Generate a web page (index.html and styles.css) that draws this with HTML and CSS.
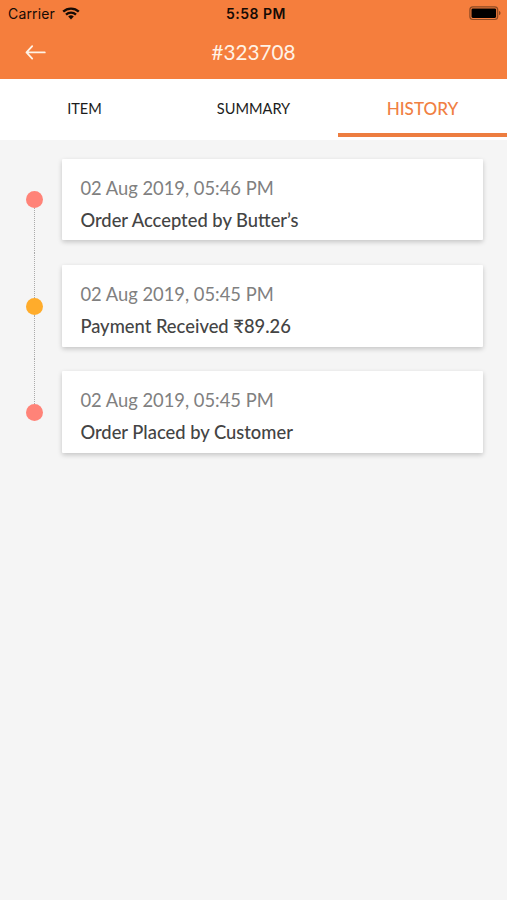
FILE: index.html
```html
<!DOCTYPE html>
<html lang="en">
<head>
<meta charset="utf-8">
<title>Order #323708</title>
<link rel="stylesheet" href="styles.css">
</head>
<body>
<header class="header">
  <div class="status">
    <div class="carrier"><span>Carrier</span>
      <svg class="wifi" width="18" height="13" viewBox="0 0 18 13" fill="none" stroke="#160b05" stroke-width="2.3"><path d="M1.2 4.7a11.2 11.2 0 0 1 15.6 0M4 7.7a7.2 7.2 0 0 1 10 0"/><path d="M9 12.4 6.2 9.6a4 4 0 0 1 5.6 0z" fill="#160b05" stroke="none"/></svg>
    </div>
    <div class="time">5:58 PM</div>
    <svg class="battery" width="33" height="15" viewBox="0 0 33 15"><rect x=".9" y=".9" width="27.8" height="12.6" rx="3" fill="none" stroke="#8c4923" stroke-width="1.2"/><rect x="2.5" y="2.5" width="24.6" height="9.4" rx="1.3" fill="#000"/><path d="M30 5.1c2 .6 2 3.6 0 4.2z" fill="#8c4923"/></svg>
  </div>
  <div class="navbar">
    <svg class="back" width="22" height="16" viewBox="0 0 22 16" fill="none" stroke="#fff3e6" stroke-width="1.8" stroke-linecap="round" stroke-linejoin="round"><path d="M19.8 8.4H1.5M7.2 2.2 1.5 8.4l5.7 6.2"/></svg>
    <h1 class="title">#323708</h1>
  </div>
</header>
<nav class="tabs">
  <div class="tab"><span>ITEM</span></div>
  <div class="tab"><span>SUMMARY</span></div>
  <div class="tab active"><span>HISTORY</span></div>
</nav>
<main class="timeline">
  <div class="event">
    <div class="rail"><i class="line hidden"></i><i class="dot"></i><i class="line"></i></div>
    <article class="card"><p class="date">02 Aug 2019, 05:46 PM</p><p class="text">Order Accepted by Butter’s</p></article>
  </div>
  <div class="event">
    <div class="rail"><i class="line"></i><i class="dot amber"></i><i class="line"></i></div>
    <article class="card"><p class="date">02 Aug 2019, 05:45 PM</p><p class="text">Payment Received ₹89.26</p></article>
  </div>
  <div class="event">
    <div class="rail"><i class="line"></i><i class="dot"></i><i class="line hidden"></i></div>
    <article class="card"><p class="date">02 Aug 2019, 05:45 PM</p><p class="text">Order Placed by Customer</p></article>
  </div>
</main>
</body>
</html>
```
FILE: styles.css
```css
* { box-sizing: border-box; }
body {
  margin: 0;
  min-height: 900px;
  background: #f5f5f5;
  font-family: Lato, "Noto Sans", sans-serif;
}
.header { height: 79px; background: #f57e3d; }
.status {
  display: grid;
  grid-template-columns: 1fr auto 1fr;
  height: 27px;
  padding: 0 5px 0 8px;
  align-items: center;
  font-family: Inter, "Liberation Sans", sans-serif;
  font-size: 14px;
  color: #160b05;
}
.carrier { display: flex; align-items: center; gap: 7px; letter-spacing: .15px; }
.time { font-weight: 600; letter-spacing: .5px; padding-left: 2px; }
.battery { justify-self: end; }
.navbar {
  display: grid;
  grid-template-columns: 1fr auto 1fr;
  align-items: center;
  height: 50px;
  padding: 0 25px;
}
.title {
  margin: 0;
  color: #fff3e6;
  font-size: 20.7px;
  line-height: 26px;
  font-weight: 400;
}
.tabs { display: flex; height: 61px; background: #fff; }
.tab {
  flex: 1;
  display: flex;
  align-items: center;
  justify-content: center;
  height: 57.5px;
  border-bottom: 4px solid transparent;
  padding-top: 6.4px;
  font-size: 14.6px;
  color: #1c1c1c;
}
.tab.active { color: #f08043; border-color: #ed7d40; font-size: 17.1px; font-weight: 500; }
.timeline { padding-top: 6.6px; }
.event { display: flex; height: 106.3px; }
.rail {
  width: 62px;
  padding-left: 7px;
  display: flex;
  flex-direction: column;
  align-items: center;
}
.line { flex: 1; width: 0; border-left: 1px dotted #aaa; }
.line.hidden { visibility: hidden; }
.dot { width: 17px; height: 17px; border-radius: 50%; background: #ff8378; }
.dot.amber { background: #ffac2b; }
.card {
  width: 421px;
  height: 81.8px;
  margin-top: 12px;
  padding: 16.15px 18.4px 0;
  background: #fff;
  border-radius: 1px;
  box-shadow: 0 2px 5px rgba(0, 0, 0, .2);
}
.date, .text { margin: 0; font-size: 18.35px; line-height: 26px; white-space: nowrap; }
.date { color: #808080; }
.text { margin-top: 6px; color: #444; font-weight: 500; }
```
